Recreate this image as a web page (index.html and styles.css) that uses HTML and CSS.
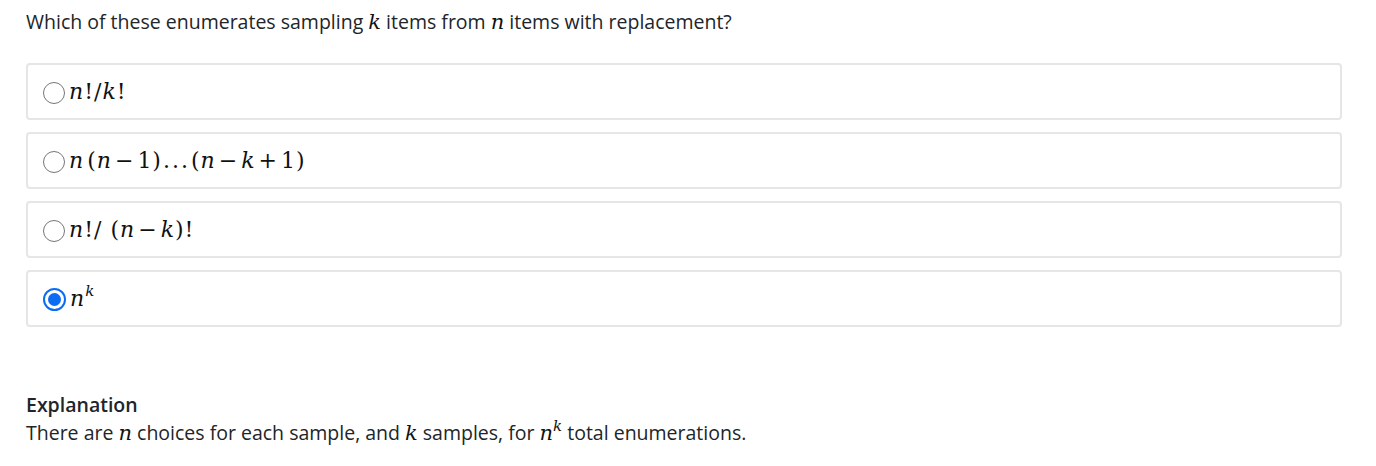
FILE: index.html
```html
<!DOCTYPE html>
<html>
<head>
<meta charset="utf-8">
<link rel="stylesheet" href="styles.css">
</head>
<body>
<div class="page">
  <p class="question">Which of these enumerates sampling <span class="m">k</span> items from <span class="m">n</span> items with replacement?</p>
  <div class="options">
    <label class="opt"><span class="radio"></span><span class="math"><i>n</i>!/<i>k</i>!</span></label>
    <label class="opt"><span class="radio"></span><span class="math"><i>n</i><span class="thin">(</span><i>n</i><span class="op">−</span>1)<span class="dots">...</span>(<i>n</i><span class="op">−</span><i>k</i><span class="op">+</span>1)</span></label>
    <label class="opt"><span class="radio"></span><span class="math"><i>n</i>!/ (<i>n</i><span class="op">−</span><i>k</i>)!</span></label>
    <label class="opt"><span class="radio on"></span><span class="math"><i>n</i><sup><i>k</i></sup></span></label>
  </div>
  <div class="expl">
    <div class="expl-title">Explanation</div>
    <div class="expl-body">There are <span class="m">n</span> choices for each sample, and <span class="m">k</span> samples, for <span class="m">n<sup>k</sup></span> total enumerations.</div>
  </div>
</div>
</body>
</html>
```
FILE: styles.css
```css
body {
  margin: 0;
  background: #fff;
  font-family: "Open Sans", sans-serif;
  color: #212529;
}
.page {
  padding: 10px 34px 0 26px;
}
.question {
  margin: 0;
  font-size: 19.5px;
  line-height: 24px;
}
.m {
  font-family: "DejaVu Serif", serif;
  font-style: italic;
  font-size: 21px;
  line-height: 1;
  color: #111;
}
.m sup {
  font-size: 15px;
  vertical-align: 9px;
  line-height: 0;
}
.options {
  margin-top: 29px;
  display: flex;
  flex-direction: column;
  gap: 12px;
}
.opt {
  display: flex;
  align-items: center;
  height: 53px;
  border: 2px solid #e6e6e6;
  border-radius: 4px;
  padding: 0 15px;
  gap: 4px;
}
.radio {
  width: 20px;
  height: 20px;
  border: 1.5px solid #767676;
  border-radius: 50%;
  box-sizing: content-box;
  flex: none;
  position: relative;
  top: 1px;
}
.radio.on {
  border: 2px solid #0a6cf5;
  width: 19px;
  height: 19px;
}
.radio.on::after {
  content: "";
  position: absolute;
  left: 3px;
  top: 3px;
  width: 13px;
  height: 13px;
  border-radius: 50%;
  background: #0a6cf5;
}
.math {
  font-family: "DejaVu Serif", serif;
  font-size: 22px;
  letter-spacing: 1px;
  color: #111;
}
.math .thin {
  margin-left: 3px;
}
.math .op {
  margin: 0 3px;
}
.math .dots {
  letter-spacing: 2px;
  margin: 0 1px;
}
.math sup {
  font-size: 15px;
  vertical-align: 10px;
  line-height: 0;
}
.expl {
  margin-top: 66px;
}
.expl-title {
  font-size: 19.5px;
  font-weight: 600;
  line-height: 24px;
}
.expl-body {
  font-size: 19.5px;
  line-height: 24px;
  margin-top: 4px;
}
```
